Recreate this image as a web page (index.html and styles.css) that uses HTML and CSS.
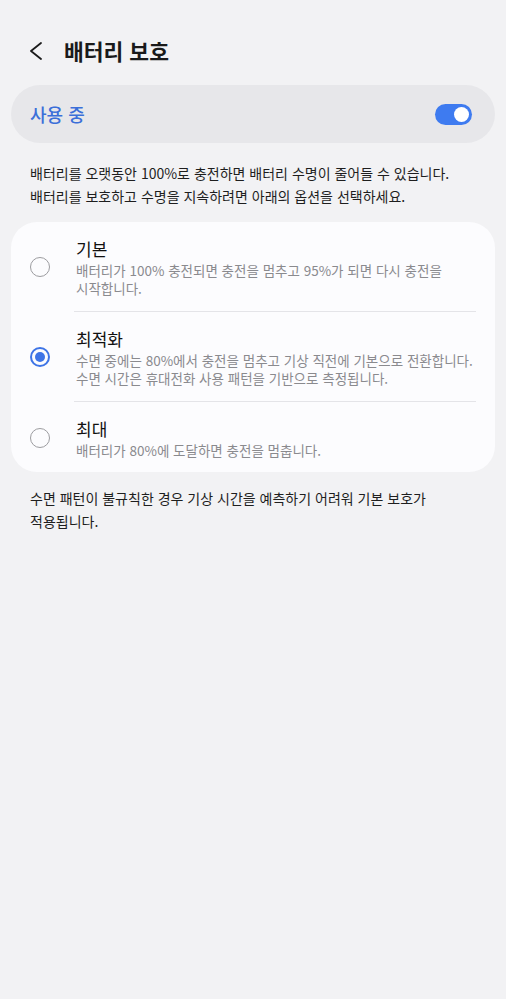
FILE: index.html
```html
<!DOCTYPE html>
<html lang="ko">
  <head>
    <meta charset="utf-8" />
    <title>배터리 보호</title>
    <link rel="stylesheet" href="styles.css">
  </head>

  <body>
    <div class="page">
      <div class="header">
        <svg class="back" width="14" height="18" viewBox="0 0 14 18">
          <polyline points="12,1 2,9 12,17" fill="none" stroke="#1a1a1a" stroke-width="1.8" stroke-linecap="round" stroke-linejoin="round" />
        </svg>
        <h1 class="title">배터리 보호</h1>
      </div>

      <div class="master">
        <span class="master-label">사용 중</span>
        <span class="switch"><span class="knob"></span></span>
      </div>

      <p class="note">배터리를 오랫동안 100%로 충전하면 배터리 수명이 줄어들 수 있습니다. 배터리를 보호하고 수명을 지속하려면 아래의 옵션을 선택하세요.</p>

      <div class="card">
        <div class="option">
          <span class="radio"></span>
          <div class="option-text">
            <div class="option-title">기본</div>
            <div class="option-desc">배터리가 100% 충전되면 충전을 멈추고 95%가 되면 다시 충전을 시작합니다.</div>
          </div>
        </div>
        <div class="divider"></div>
        <div class="option">
          <span class="radio checked"></span>
          <div class="option-text">
            <div class="option-title">최적화</div>
            <div class="option-desc">수면 중에는 80%에서 충전을 멈추고 기상 직전에 기본으로 전환합니다. 수면 시간은 휴대전화 사용 패턴을 기반으로 측정됩니다.</div>
          </div>
        </div>
        <div class="divider"></div>
        <div class="option last">
          <span class="radio"></span>
          <div class="option-text">
            <div class="option-title">최대</div>
            <div class="option-desc">배터리가 80%에 도달하면 충전을 멈춥니다.</div>
          </div>
        </div>
      </div>

      <p class="note footer">수면 패턴이 불규칙한 경우 기상 시간을 예측하기 어려워 기본 보호가 적용됩니다.</p>
    </div>
  </body>
</html>
```

FILE: styles.css
```css
* {
  margin: 0;
  padding: 0;
  box-sizing: border-box;
}
html,
body {
  height: 100%;
}
body {
  background-color: #f2f2f4;
  font-family: "Noto Sans CJK KR", "Noto Sans", sans-serif;
  color: #1a1a1a;
  word-break: keep-all;
}
.page {
  padding: 0 11px;
}
.header {
  display: flex;
  align-items: center;
  height: 85px;
  padding: 16px 0 0 18px;
  gap: 21px;
}
.back {
  display: block;
}
.title {
  font-size: 21.5px;
  font-weight: 700;
  line-height: 30px;
}
.master {
  display: flex;
  align-items: center;
  justify-content: space-between;
  height: 58px;
  padding: 0 23px 0 19px;
  background-color: #e7e7ea;
  border-radius: 29px;
}
.master-label {
  font-size: 18px;
  font-weight: 500;
  color: #3b6fd9;
}
.switch {
  display: flex;
  align-items: center;
  justify-content: flex-end;
  width: 37px;
  height: 21px;
  padding: 0 3px;
  background-color: #3e7bf0;
  border-radius: 11px;
}
.knob {
  width: 15px;
  height: 15px;
  background-color: #fff;
  border-radius: 50%;
}
.note {
  font-size: 14px;
  line-height: 23px;
  padding: 19px 19px 14px;
  color: #1e1e1e;
}
.footer {
  padding-top: 15px;
  padding-right: 40px;
}
.card {
  background-color: #fcfcfe;
  border-radius: 26px;
  padding: 0 19px;
}
.option {
  display: flex;
  align-items: center;
  gap: 26px;
  padding: 15px 0 14px;
}
.option.last {
  padding-bottom: 13px;
}
.radio {
  flex: none;
  width: 20px;
  height: 20px;
  border: 1.5px solid #9c9ca0;
  border-radius: 50%;
}
.radio.checked {
  display: flex;
  align-items: center;
  justify-content: center;
  border: 2.5px solid #3e74e6;
}
.radio.checked::after {
  content: "";
  width: 10px;
  height: 10px;
  background-color: #3e74e6;
  border-radius: 50%;
}
.option-title {
  font-size: 17px;
  line-height: 24px;
  color: #111;
}
.option-desc {
  font-size: 13.5px;
  line-height: 18px;
  color: #8a8a8e;
}
.divider {
  height: 1px;
  margin-left: 44px;
  background-color: #e4e4e8;
}
```
